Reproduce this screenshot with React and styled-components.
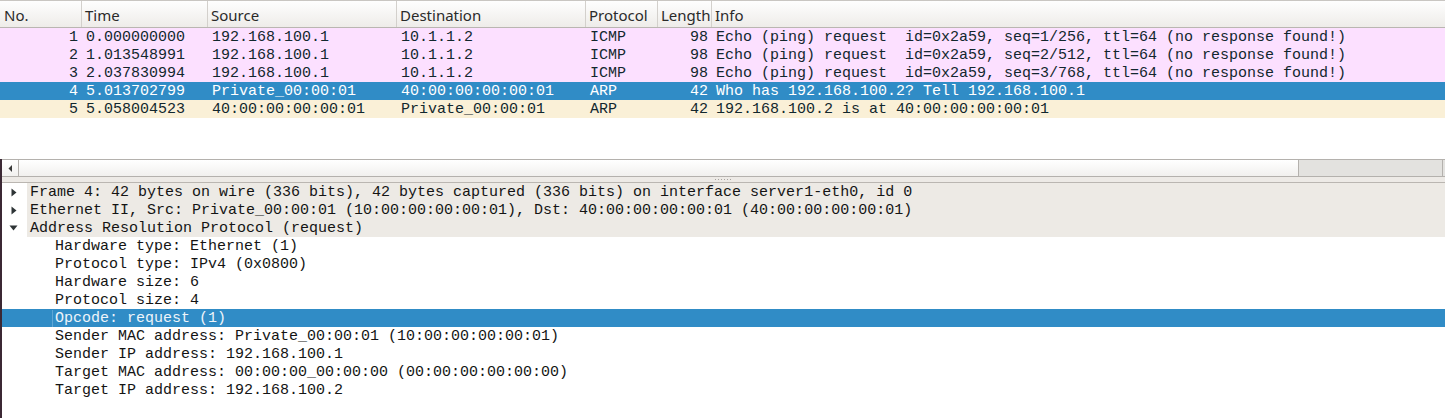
import React from "react";
import styled, { createGlobalStyle, css } from "styled-components";

const GlobalStyle = createGlobalStyle`
  html, body { margin: 0; padding: 0; background: #ffffff; overflow: hidden; }
  * { box-sizing: border-box; }
`;

const MONO = `"Liberation Mono", "DejaVu Sans Mono", monospace`;
const SANS = `"Noto Sans", "Open Sans", sans-serif`;
const COLS = "82px 126px 189px 189px 72px 54px 1fr";

const Window = styled.div`
  width: 1445px;
  height: 418px;
  display: flex;
  flex-direction: column;
  background: #ffffff;
  overflow: hidden;
`;

const Header = styled.div`
  display: grid;
  grid-template-columns: ${COLS};
  height: 28px;
  border-top: 1px solid #c9c6c2;
  border-bottom: 1px solid #b9b6b1;
  background: linear-gradient(#fefefe, #eeece9);
`;

const HeaderCell = styled.div`
  font-family: ${SANS};
  font-size: 15px;
  color: #2a2a2a;
  line-height: 28px;
  padding-left: ${(p) => (p.$first ? 4 : 3)}px;
  border-right: ${(p) => (p.$last ? "none" : "1px solid #d3d0cc")};
  white-space: nowrap;
  overflow: hidden;
`;

const rowColors = {
  icmp: css`background: #fce0ff; color: #12272e;`,
  arp: css`background: #faf0d7; color: #12272e;`,
  selected: css`background: #308cc6; color: #ffffff;`,
};

const PacketRow = styled.div`
  display: grid;
  grid-template-columns: ${COLS};
  height: 18px;
  padding-top: 1px;
  font-family: ${MONO};
  font-size: 15px;
  line-height: 18px;
  ${(p) => rowColors[p.$kind]}
`;

const Cell = styled.div`
  white-space: pre;
  overflow: visible;
  padding: 0 4px;
  text-align: ${(p) => (p.$right ? "right" : "left")};
`;

const ListBody = styled.div`
  height: 131px;
  display: flex;
  flex-direction: column;
`;

const ListFill = styled.div`
  flex: 1;
  background: #ffffff;
`;

const LowerArea = styled.div`
  flex: 1;
  display: flex;
  flex-direction: column;
  border-left: 2px solid #3b2834;
`;

const HScroll = styled.div`
  height: 18px;
  display: flex;
  border-top: 1px solid #b4b1ad;
  border-bottom: 1px solid #b4b1ad;
  background: #e3e2df;
`;

const ScrollButton = styled.div`
  width: 17px;
  display: flex;
  align-items: center;
  justify-content: center;
  background: linear-gradient(#ffffff, #f2f1ef);
  border-right: 1px solid #b4b1ad;
`;

const ScrollHandle = styled.div`
  width: 1280px;
  background: linear-gradient(#ffffff, #f1f0ee);
  border-right: 1px solid #b4b1ad;
`;

const ScrollGroove = styled.div`
  flex: 1;
  background: #e3e2df;
  border-right: 1px solid #b4b1ad;
  margin-right: 2px;
`;

const Splitter = styled.div`
  height: 6px;
  background: #edeae6;
  border-bottom: 1px solid #bab6b1;
  display: flex;
  justify-content: center;
  padding-top: 2px;
`;

const SplitterDots = styled.div`
  width: 18px;
  height: 1px;
  background: repeating-linear-gradient(90deg, #a7a39f 0 1px, transparent 1px 3px);
`;

const Tree = styled.div`
  flex: 1;
  display: flex;
  flex-direction: column;
  background: #ffffff;
`;

const TreeRow = styled.div`
  display: flex;
  height: 18px;
  font-family: ${MONO};
  font-size: 15px;
  line-height: 18px;
  color: ${(p) => (p.$selected ? "#eef4fa" : "#141414")};
  background: ${(p) => (p.$selected ? "#308cc6" : "transparent")};
`;

const Toggle = styled.div`
  width: 25px;
  flex: none;
  display: flex;
  align-items: center;
  justify-content: center;
  padding-right: 2px;
`;

const Label = styled.div`
  flex: 1;
  white-space: pre;
  padding-top: 1px;
  padding-left: ${(p) => (p.$level ? 28 : 3)}px;
  background: ${(p) => (p.$top ? "#edeae5" : "transparent")};
`;

const FocusText = styled.span`
  display: inline-block;
  height: 17px;
  border-left: 1px solid #5ea6d6;
  padding-left: 2px;
  margin-left: -3px;
`;

const ArrowRight = () => (
  <svg width="6" height="9" viewBox="0 0 6 9">
    <path d="M0.5 0.5 L5.5 4.5 L0.5 8.5 Z" fill="#2e3436" />
  </svg>
);

const ArrowDown = () => (
  <svg width="9" height="6" viewBox="0 0 9 6">
    <path d="M0.5 0.5 L8.5 0.5 L4.5 5.5 Z" fill="#2e3436" />
  </svg>
);

const ArrowLeft = () => (
  <svg width="5" height="7" viewBox="0 0 5 7">
    <path d="M4 0 L4 7 L0.5 3.5 Z" fill="#3a3a3a" />
  </svg>
);

const headers = ["No.", "Time", "Source", "Destination", "Protocol", "Length", "Info"];

const packets = [
  { no: 1, time: "0.000000000", src: "192.168.100.1", dst: "10.1.1.2", proto: "ICMP", len: 98, info: "Echo (ping) request  id=0x2a59, seq=1/256, ttl=64 (no response found!)", kind: "icmp" },
  { no: 2, time: "1.013548991", src: "192.168.100.1", dst: "10.1.1.2", proto: "ICMP", len: 98, info: "Echo (ping) request  id=0x2a59, seq=2/512, ttl=64 (no response found!)", kind: "icmp" },
  { no: 3, time: "2.037830994", src: "192.168.100.1", dst: "10.1.1.2", proto: "ICMP", len: 98, info: "Echo (ping) request  id=0x2a59, seq=3/768, ttl=64 (no response found!)", kind: "icmp" },
  { no: 4, time: "5.013702799", src: "Private_00:00:01", dst: "40:00:00:00:00:01", proto: "ARP", len: 42, info: "Who has 192.168.100.2? Tell 192.168.100.1", kind: "selected" },
  { no: 5, time: "5.058004523", src: "40:00:00:00:00:01", dst: "Private_00:00:01", proto: "ARP", len: 42, info: "192.168.100.2 is at 40:00:00:00:00:01", kind: "arp" },
];

const tree = [
  { text: "Frame 4: 42 bytes on wire (336 bits), 42 bytes captured (336 bits) on interface server1-eth0, id 0", top: true, toggle: "right" },
  { text: "Ethernet II, Src: Private_00:00:01 (10:00:00:00:00:01), Dst: 40:00:00:00:00:01 (40:00:00:00:00:01)", top: true, toggle: "right" },
  { text: "Address Resolution Protocol (request)", top: true, toggle: "down" },
  { text: "Hardware type: Ethernet (1)", level: 1 },
  { text: "Protocol type: IPv4 (0x0800)", level: 1 },
  { text: "Hardware size: 6", level: 1 },
  { text: "Protocol size: 4", level: 1 },
  { text: "Opcode: request (1)", level: 1, selected: true },
  { text: "Sender MAC address: Private_00:00:01 (10:00:00:00:00:01)", level: 1 },
  { text: "Sender IP address: 192.168.100.1", level: 1 },
  { text: "Target MAC address: 00:00:00_00:00:00 (00:00:00:00:00:00)", level: 1 },
  { text: "Target IP address: 192.168.100.2", level: 1 },
];

export default function App() {
  return (
    <>
      <GlobalStyle />
      <Window>
        <Header>
          {headers.map((h, i) => (
            <HeaderCell key={h} $first={i === 0} $last={i === headers.length - 1}>
              {h}
            </HeaderCell>
          ))}
        </Header>
        <ListBody>
          {packets.map((p) => (
            <PacketRow key={p.no} $kind={p.kind}>
              <Cell $right>{p.no}</Cell>
              <Cell>{p.time}</Cell>
              <Cell>{p.src}</Cell>
              <Cell>{p.dst}</Cell>
              <Cell>{p.proto}</Cell>
              <Cell $right>{p.len}</Cell>
              <Cell>{p.info}</Cell>
            </PacketRow>
          ))}
          <ListFill />
        </ListBody>
        <LowerArea>
          <HScroll>
            <ScrollButton>
              <ArrowLeft />
            </ScrollButton>
            <ScrollHandle />
            <ScrollGroove />
          </HScroll>
          <Splitter>
            <SplitterDots />
          </Splitter>
          <Tree>
            {tree.map((r, i) => (
              <TreeRow key={i} $selected={r.selected}>
                <Toggle>
                  {r.toggle === "right" && <ArrowRight />}
                  {r.toggle === "down" && <ArrowDown />}
                </Toggle>
                <Label $top={r.top} $level={r.level}>
                  {r.selected ? <FocusText>{r.text}</FocusText> : r.text}
                </Label>
              </TreeRow>
            ))}
          </Tree>
        </LowerArea>
      </Window>
    </>
  );
}
